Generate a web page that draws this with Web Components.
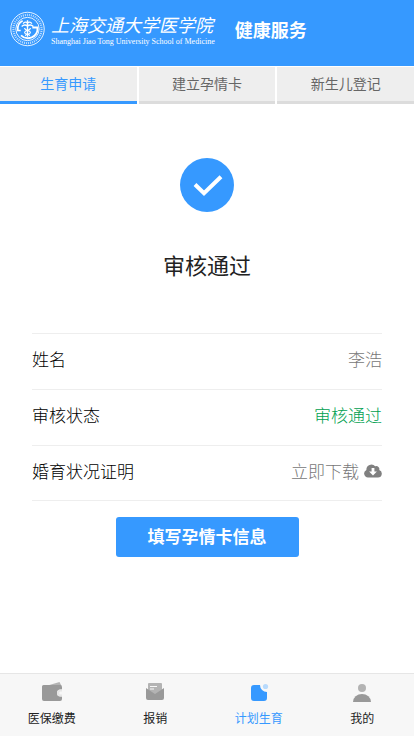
<!DOCTYPE html>
<html lang="zh-CN">
<head>
  <meta charset="utf-8">
  <meta name="viewport" content="width=device-width, initial-scale=1">
  <title>健康服务</title>
  <style>
    body {
      margin: 0;
      background: #fff;
      font-family: "Noto Sans CJK SC", sans-serif;
    }
  </style>
</head>
<body>
  <health-app></health-app>

  <script>
    class SchoolLogo extends HTMLElement {
      constructor() {
        super();

        this.attachShadow({ mode: "open" });
      }

      connectedCallback() {
        this.shadowRoot.innerHTML = `
          <style>
            :host {
              display: flex;
              align-items: center;
              gap: 6px;
              color: #fff;
              white-space: nowrap;
            }

            svg {
              width: 35px;
              height: 36px;
              flex: none;
            }

            .name {
              display: flex;
              flex-direction: column;
            }

            .cn {
              font-size: 18px;
              line-height: 26px;
              font-style: italic;
              font-weight: 400;
            }

            .en {
              font-family: "Liberation Serif", serif;
              font-size: 8px;
              line-height: 10px;
            }
          </style>

          <svg viewBox="0 0 36 36" fill="none" stroke="#fff" aria-hidden="true">
            <circle cx="18" cy="18" r="17.2" stroke-width=".9"/>
            <circle cx="18" cy="18" r="14.5" stroke-width="2.2" stroke-dasharray="1.1 1" opacity=".65"/>
            <circle cx="18" cy="18" r="12" stroke-width=".9"/>
            <path d="M13 9.500C9 11.500 7.500 15 8 19.500h3" stroke-width="1.700"/>
            <path d="M23 16.500h5.300c.3 4.500-2 8.500-6 10.200-4 1.500-8 .8-11-2.200" stroke-width="1.900"/>
            <path d="M18 9v17M13.500 12.500c1.500-2 3-2 4.500-.5 1.500-1.500 3-1.500 4.500.5M12 15.500c2-2 4-2 6-.5 2-1.500 4-1.500 6 .5" stroke-width="1.400"/>
            <path d="M15 17c0 3 6 2 6 4.500S15.500 23 16 25M21 17c0 3-6 2-6 4.500s5.500 1.500 5 3.500" stroke-width="1.100"/>
          </svg>
          <div class="name">
            <span class="cn">上海交通大学医学院</span>
            <span class="en">Shanghai Jiao Tong University School of Medicine</span>
          </div>
        `;
      }
    }

    class AppHeader extends HTMLElement {
      constructor() {
        super();

        this.attachShadow({ mode: "open" });
      }

      connectedCallback() {
        this.shadowRoot.innerHTML = `
          <style>
            :host {
              display: block;
              background: #3699ff;
              color: #fff;
            }

            header {
              display: flex;
              align-items: center;
              gap: 20px;
              padding: 10px 10px 18px;
            }

            h1 {
              margin: 0;
              font-size: 18px;
              line-height: 38px;
              font-weight: 700;
              white-space: nowrap;
            }
          </style>

          <header>
            <school-logo></school-logo>
            <h1><slot></slot></h1>
          </header>
        `;
      }
    }

    class TabStrip extends HTMLElement {
      constructor() {
        super();

        this.attachShadow({ mode: "open" });
      }

      connectedCallback() {
        const tabs = ["生育申请", "建立孕情卡", "新生儿登记"];

        this.shadowRoot.innerHTML = `
          <style>
            :host {
              display: block;
              padding-top: 1px;
            }

            .tabs {
              display: grid;
              grid-template-columns: repeat(3, 1fr);
              gap: 2px;
            }

            button {
              height: 37px;
              margin: 0;
              padding: 0 0 2px;
              border: 0;
              border-bottom: 3px solid #dcdcdc;
              background: #eee;
              color: #666;
              font: inherit;
              font-size: 14px;
              line-height: 32px;
            }

            button[aria-selected="true"] {
              border-color: #3699ff;
              color: #3699ff;
            }
          </style>

          <div class="tabs" role="tablist">
            ${tabs
              .map(
                (tab, i) =>
                  `<button type="button" role="tab" aria-selected="${i === 0}">${tab}</button>`
              )
              .join("")}
          </div>
        `;

        const buttons = this.shadowRoot.querySelectorAll("button");

        buttons.forEach((button) => {
          button.addEventListener("click", () => {
            buttons.forEach((other) =>
              other.setAttribute("aria-selected", other === button)
            );
          });
        });
      }
    }

    class ResultStatus extends HTMLElement {
      constructor() {
        super();

        this.attachShadow({ mode: "open" });
      }

      connectedCallback() {
        this.shadowRoot.innerHTML = `
          <style>
            :host {
              display: flex;
              flex-direction: column;
              align-items: center;
              gap: 36px;
              padding: 54px 0 52px;
            }

            svg {
              width: 54px;
              height: 54px;
            }

            h2 {
              margin: 0;
              color: #222;
              font-size: 22px;
              line-height: 33px;
              font-weight: 400;
            }
          </style>

          <svg viewBox="0 0 54 54" aria-hidden="true">
            <circle cx="27" cy="27" r="27" fill="#3699ff"/>
            <path d="M15 26.500l9 8.800 17-16.500" fill="none" stroke="#fff" stroke-width="4"/>
          </svg>
          <h2><slot></slot></h2>
        `;
      }
    }

    class InfoRow extends HTMLElement {
      constructor() {
        super();

        this.attachShadow({ mode: "open" });
      }

      connectedCallback() {
        const label = this.getAttribute("label") || "";

        this.shadowRoot.innerHTML = `
          <style>
            :host {
              display: block;
              border-top: 1px solid #eee;
              color: #777;
              font-size: 17px;
              line-height: 25px;
              font-weight: 300;
            }

            :host([tone="success"]) {
              color: #00a050;
            }

            :host(:last-of-type) {
              border-bottom: 1px solid #eee;
            }

            dl {
              display: flex;
              justify-content: space-between;
              margin: 0;
              padding: 12px 0 18px;
            }

            :host(:last-of-type) dl {
              padding-bottom: 17px;
            }

            dt {
              color: #000;
            }

            dd {
              margin: 0;
            }
          </style>

          <dl>
            <dt>${label}</dt>
            <dd><slot></slot></dd>
          </dl>
        `;
      }
    }

    class DownloadLink extends HTMLElement {
      constructor() {
        super();

        this.attachShadow({ mode: "open" });
      }

      connectedCallback() {
        this.shadowRoot.innerHTML = `
          <style>
            :host {
              display: block;
            }

            a {
              display: flex;
              align-items: center;
              gap: 5px;
              color: inherit;
              text-decoration: none;
            }

            svg {
              width: 18px;
              height: 14px;
            }
          </style>

          <a href="#download">
            <slot></slot>
            <svg viewBox="0 0 18 14" aria-hidden="true">
              <path fill="#808080" fill-rule="evenodd" d="M4 13.500A4 4 0 0 1 2.400 5.900 5 5 0 0 1 11.200 2.300a3 3 0 0 1 4 3.800A3.800 3.800 0 0 1 14 13.500zM7.600 4v3.500H5.100L9 11.500l3.900-4h-2.500V4z"/>
            </svg>
          </a>
        `;
      }
    }

    class PrimaryButton extends HTMLElement {
      constructor() {
        super();

        this.attachShadow({ mode: "open" });
      }

      connectedCallback() {
        this.shadowRoot.innerHTML = `
          <style>
            :host {
              display: flex;
              justify-content: center;
              padding: 16px 0;
            }

            button {
              margin: 0;
              padding: 0 32px 2px;
              border: 0;
              border-radius: 3px;
              background: #3699ff;
              color: #fff;
              font: inherit;
              font-size: 17px;
              line-height: 38px;
              font-weight: 700;
            }
          </style>

          <button type="button"><slot></slot></button>
        `;
      }
    }

    class BottomNav extends HTMLElement {
      constructor() {
        super();

        this.attachShadow({ mode: "open" });
      }

      connectedCallback() {
        const items = [
          {
            text: "医保缴费",
            icon: `
              <path d="M6 5L19.500 1l2 4z" fill="#b3b3b3"/>
              <path d="M3.500 4H20a2 2 0 0 1 2 2v2.500h-1.500a3.500 3.500 0 0 0 0 7H22V18a2 2 0 0 1-2 2H4a2 2 0 0 1-2-2V5.500A1.500 1.500 0 0 1 3.500 4z" fill="#999"/>
              <path d="M22 8.500h-1.500a3.500 3.500 0 0 0 0 7H22v-2h-1.300a1.500 1.500 0 0 1 0-3H22z" fill="#e6e6e6"/>`,
          },
          {
            text: "报销",
            icon: `
              <path d="M6 2h12a1 1 0 0 1 1 1v11H5V3a1 1 0 0 1 1-1z" fill="#b3b3b3"/>
              <path d="M7 5.500h7M7 8h4" stroke="#f7f7f7" stroke-width="1.200"/>
              <path d="M3 7l9 6 9-6v10a2 2 0 0 1-2 2H5a2 2 0 0 1-2-2z" fill="#999"/>`,
          },
          {
            text: "计划生育",
            active: true,
            icon: `
              <path d="M7 4h6a7 7 0 0 0 7 7v6a3 3 0 0 1-3 3H7a3 3 0 0 1-3-3V7a3 3 0 0 1 3-3z" fill="#3699ff"/>
              <circle cx="18.500" cy="5.500" r="2.600" fill="#b8dafc"/>`,
          },
          {
            text: "我的",
            icon: `
              <circle cx="12" cy="7" r="4" fill="#b3b3b3"/>
              <path d="M3 21a9 8 0 0 1 18 0z" fill="#999"/>`,
          },
        ];

        this.shadowRoot.innerHTML = `
          <style>
            :host {
              display: block;
              border-top: 1px solid #e6e6e6;
              background: #f7f7f7;
            }

            nav {
              display: grid;
              grid-template-columns: repeat(4, 1fr);
              padding: 7px 0 9px;
            }

            a {
              display: flex;
              flex-direction: column;
              align-items: center;
              gap: 3px;
              color: #222;
              font-size: 12px;
              line-height: 19px;
              text-decoration: none;
            }

            a[aria-current] {
              color: #3699ff;
            }

            svg {
              width: 24px;
              height: 24px;
            }
          </style>

          <nav>
            ${items
              .map(
                ({ text, icon, active }) => `
                  <a href="#" ${active ? 'aria-current="page"' : ""}>
                    <svg viewBox="0 0 24 24" fill="none" aria-hidden="true">${icon}</svg>
                    <span>${text}</span>
                  </a>`
              )
              .join("")}
          </nav>
        `;
      }
    }

    class HealthApp extends HTMLElement {
      constructor() {
        super();

        this.attachShadow({ mode: "open" });
      }

      connectedCallback() {
        this.shadowRoot.innerHTML = `
          <style>
            :host {
              display: flex;
              flex-direction: column;
              min-height: 100vh;
            }

            main {
              flex: 1;
              padding: 0 32px;
            }
          </style>

          <app-header>健康服务</app-header>
          <tab-strip></tab-strip>
          <main>
            <result-status>审核通过</result-status>
            <info-row label="姓名">李浩</info-row>
            <info-row label="审核状态" tone="success">审核通过</info-row>
            <info-row label="婚育状况证明"><download-link>立即下载</download-link></info-row>
            <primary-button>填写孕情卡信息</primary-button>
          </main>
          <bottom-nav></bottom-nav>
        `;
      }
    }

    customElements.define("school-logo", SchoolLogo);
    customElements.define("app-header", AppHeader);
    customElements.define("tab-strip", TabStrip);
    customElements.define("result-status", ResultStatus);
    customElements.define("info-row", InfoRow);
    customElements.define("download-link", DownloadLink);
    customElements.define("primary-button", PrimaryButton);
    customElements.define("bottom-nav", BottomNav);
    customElements.define("health-app", HealthApp);
  </script>
</body>
</html>
